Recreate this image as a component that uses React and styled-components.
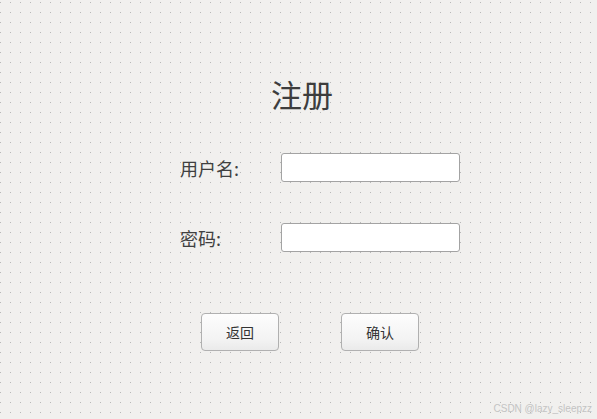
import React from 'react';
import styled, { createGlobalStyle } from 'styled-components';

const GlobalStyle = createGlobalStyle`
    html, body {
        margin: 0;
        padding: 0;
    }
    body {
        font-family: "Noto Sans CJK SC", "Noto Sans", sans-serif;
    }
`;

const Page = styled.div`
    position: relative;
    width: 597px;
    height: 419px;
    box-sizing: border-box;
    padding-top: 78px;
    background-color: #f1f0ee;
    background-image: radial-gradient(circle at 0.5px 0.5px, #b8b8b8 0.6px, transparent 0.9px);
    background-size: 10px 10px;
    background-position: 10px 2px;
    overflow: hidden;
`;

const Title = styled.h1`
    margin: 0 0 0 271px;
    font-size: 31px;
    line-height: 31px;
    font-weight: 400;
    color: #3d3d3d;
`;

const Form = styled.div`
    margin: 44px 0 0 180px;
    display: flex;
    flex-direction: column;
    gap: 41px;
`;

const Row = styled.div`
    display: flex;
    align-items: center;
    height: 29px;
`;

const Label = styled.label`
    width: 101px;
    font-size: 18px;
    color: #404040;
`;

const Input = styled.input`
    width: 179px;
    height: 29px;
    box-sizing: border-box;
    border: 1px solid #a3a3a3;
    border-radius: 3px;
    background: #fff;
    outline: none;
`;

const Buttons = styled.div`
    display: flex;
    gap: 62px;
    margin: 61px 0 0 201px;
`;

const Button = styled.button`
    width: 78px;
    height: 38px;
    box-sizing: border-box;
    border: 1px solid #b0b0b0;
    border-radius: 4px;
    background: linear-gradient(#fdfdfd, #f3f3f3 70%, #eaeaea);
    font-family: "Noto Sans CJK SC", sans-serif;
    font-size: 14px;
    color: #333;
    padding: 0;
`;

const Watermark = styled.div`
    position: absolute;
    right: 5px;
    bottom: 5px;
    font-family: "Liberation Sans", Arial, sans-serif;
    font-size: 10px;
    color: #c4c4c4;
`;

const App = () => {
    return (
        <>
            <GlobalStyle />
            <Page>
                <Title>注册</Title>
                <Form>
                    <Row>
                        <Label>用户名:</Label>
                        <Input type="text" />
                    </Row>
                    <Row>
                        <Label>密码:</Label>
                        <Input type="password" />
                    </Row>
                </Form>
                <Buttons>
                    <Button>返回</Button>
                    <Button>确认</Button>
                </Buttons>
                <Watermark>CSDN @lazy_sleepzz</Watermark>
            </Page>
        </>
    );
};

export default App;
